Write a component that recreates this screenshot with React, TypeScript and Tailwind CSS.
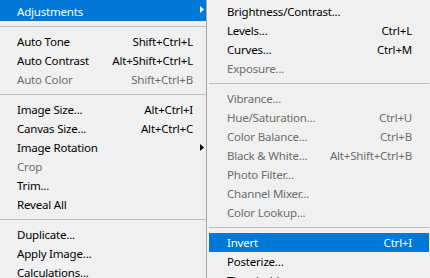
import React from 'react';

type Item =
  | { kind: 'sep' }
  | { kind: 'item'; label: string; shortcut?: string; disabled?: boolean; active?: boolean; submenu?: boolean };

const mainItems: Item[] = [
  { kind: 'item', label: 'Auto Tone', shortcut: 'Shift+Ctrl+L' },
  { kind: 'item', label: 'Auto Contrast', shortcut: 'Alt+Shift+Ctrl+L' },
  { kind: 'item', label: 'Auto Color', shortcut: 'Shift+Ctrl+B', disabled: true },
  { kind: 'sep' },
  { kind: 'item', label: 'Image Size...', shortcut: 'Alt+Ctrl+I' },
  { kind: 'item', label: 'Canvas Size...', shortcut: 'Alt+Ctrl+C' },
  { kind: 'item', label: 'Image Rotation', submenu: true },
  { kind: 'item', label: 'Crop', disabled: true },
  { kind: 'item', label: 'Trim...' },
  { kind: 'item', label: 'Reveal All' },
  { kind: 'sep' },
  { kind: 'item', label: 'Duplicate...' },
  { kind: 'item', label: 'Apply Image...' },
  { kind: 'item', label: 'Calculations...' },
];

const subItems: Item[] = [
  { kind: 'item', label: 'Brightness/Contrast...' },
  { kind: 'item', label: 'Levels...', shortcut: 'Ctrl+L' },
  { kind: 'item', label: 'Curves...', shortcut: 'Ctrl+M' },
  { kind: 'item', label: 'Exposure...', disabled: true },
  { kind: 'sep' },
  { kind: 'item', label: 'Vibrance...', disabled: true },
  { kind: 'item', label: 'Hue/Saturation...', shortcut: 'Ctrl+U', disabled: true },
  { kind: 'item', label: 'Color Balance...', shortcut: 'Ctrl+B', disabled: true },
  { kind: 'item', label: 'Black & White...', shortcut: 'Alt+Shift+Ctrl+B', disabled: true },
  { kind: 'item', label: 'Photo Filter...', disabled: true },
  { kind: 'item', label: 'Channel Mixer...', disabled: true },
  { kind: 'item', label: 'Color Lookup...', disabled: true },
  { kind: 'sep' },
  { kind: 'item', label: 'Invert', shortcut: 'Ctrl+I', active: true },
  { kind: 'item', label: 'Posterize...' },
  { kind: 'item', label: 'Threshold...' },
];

const Arrow: React.FC<{ white?: boolean }> = ({ white }) => (
  <svg width="4" height="7" viewBox="0 0 4 7" className="absolute right-[2px] top-[6px]">
    <polygon points="0,0 4,3.5 0,7" fill={white ? '#ffffff' : '#000000'} />
  </svg>
);

const Row: React.FC<{ item: Item; sub?: boolean }> = ({ item, sub }) => {
  if (item.kind === 'sep') {
    return (
      <div className="h-[11px] pt-[5px]">
        <div className="h-px bg-[#bdbdbd]" />
      </div>
    );
  }
  const color = item.active ? 'bg-[#0078d7] text-white' : item.disabled ? 'text-[#6d6d6d]' : 'text-black';
  return (
    <div
      className={`relative flex h-[19px] items-center justify-between whitespace-nowrap ${color} ${
        sub ? 'pl-[18px] pr-[17px]' : 'pl-[17px] pr-[13px]'
      }`}
    >
      <span>{item.label}</span>
      {item.shortcut && <span>{item.shortcut}</span>}
      {item.submenu && <Arrow white={item.active} />}
    </div>
  );
};

export default function App() {
  return (
    <div
      className="flex h-[278px] w-[430px] overflow-hidden bg-[#f0f0f0] text-[11.5px] leading-[19px] tracking-[-0.2px]"
      style={{ fontFamily: '"Noto Sans", "Open Sans", sans-serif' }}
    >
      <div className="w-[206px] shrink-0">
        <div className="relative flex h-[21px] items-start bg-[#0078d7] pl-[17px] pt-[2px] text-white">
          <span>Adjustments</span>
          <Arrow white />
        </div>
        <Row item={{ kind: 'sep' }} />
        {mainItems.map((it, i) => (
          <Row key={i} item={it} />
        ))}
      </div>
      <div className="w-px shrink-0 bg-[#a8a8a8]" />
      <div className="flex-1 pl-[2px] pr-px pt-[2px]">
        {subItems.map((it, i) => (
          <Row key={i} item={it} sub />
        ))}
      </div>
    </div>
  );
}
